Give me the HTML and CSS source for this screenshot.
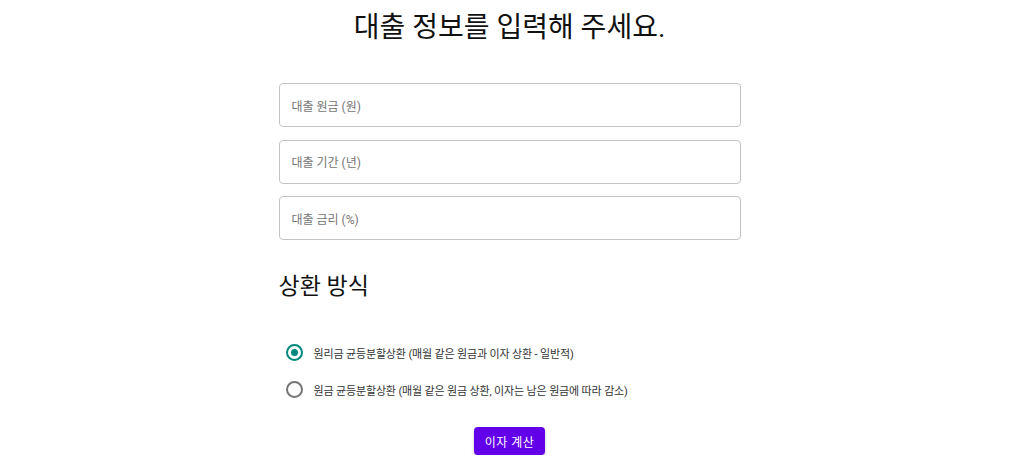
FILE: index.html
```html
<!DOCTYPE html>
<html lang="ko">
<head>
<meta charset="utf-8">
<link rel="stylesheet" href="styles.css">
</head>
<body>
<main class="page">
  <h1 class="title">대출 정보를 입력해 주세요.</h1>
  <form class="form">
    <div class="field"><span class="placeholder">대출 원금 (원)</span></div>
    <div class="field"><span class="placeholder">대출 기간 (년)</span></div>
    <div class="field"><span class="placeholder">대출 금리 (%)</span></div>
    <h2 class="section">상환 방식</h2>
    <div class="radios">
      <label class="radio-row">
        <span class="radio checked"><span class="dot"></span></span>
        <span class="radio-label">원리금 균등분할상환 (매월 같은 원금과 이자 상환 - 일반적)</span>
      </label>
      <label class="radio-row">
        <span class="radio"></span>
        <span class="radio-label">원금 균등분할상환 (매월 같은 원금 상환, 이자는 남은 원금에 따라 감소)</span>
      </label>
    </div>
    <div class="actions">
      <button type="button" class="btn">이자 계산</button>
    </div>
  </form>
</main>
</body>
</html>
```
FILE: styles.css
```css
* { box-sizing: border-box; }
html, body { margin: 0; padding: 0; background: #fff; }
body {
  font-family: Roboto, "Noto Sans CJK KR", sans-serif;
  color: #000;
  padding-right: 5px;
}
.page {
  width: 462px;
  margin: 0 auto;
  display: flex;
  flex-direction: column;
}
.title {
  margin: 10px -100px 0;
  text-align: center;
  font-size: 28px;
  font-weight: 400;
  line-height: 36px;
  color: #111;
}
.form {
  display: flex;
  flex-direction: column;
  margin-top: 37px;
}
.field {
  height: 44px;
  border: 1px solid #c4c4c4;
  border-radius: 4px;
  display: flex;
  align-items: center;
  padding: 0 12px;
  margin-bottom: 12.5px;
}
.placeholder {
  font-size: 12px;
  color: #757575;
}
.section {
  margin: 18.5px 0 0;
  font-size: 23px;
  font-weight: 400;
  line-height: 32px;
  color: #111;
}
.radios {
  display: flex;
  flex-direction: column;
  margin-top: 39px;
  padding-left: 7px;
  gap: 16px;
}
.radio-row {
  display: flex;
  align-items: center;
  gap: 11px;
  height: 21px;
}
.radio {
  width: 17px;
  height: 17px;
  border: 2px solid #757575;
  border-radius: 50%;
  display: flex;
  align-items: center;
  justify-content: center;
}
.radio.checked { border-color: #00897b; }
.dot {
  width: 7px;
  height: 7px;
  border-radius: 50%;
  background: #00897b;
}
.radio-label {
  font-size: 11px;
  letter-spacing: -0.15px;
  color: #333;
}
.actions {
  display: flex;
  justify-content: center;
  margin-top: 27px;
}
.btn {
  font-family: Roboto, "Noto Sans CJK KR", sans-serif;
  font-size: 12px;
  font-weight: 400;
  color: #fff;
  background: #6200ea;
  border: 0;
  border-radius: 4px;
  width: 71px;
  height: 28px;
  box-shadow: 0 2px 3px rgba(0,0,0,0.25);
  letter-spacing: 0.5px;
}
```
